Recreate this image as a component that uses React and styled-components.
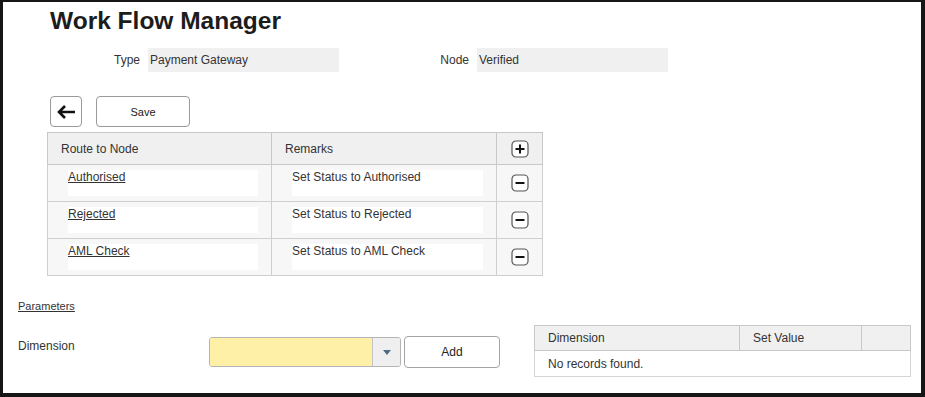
import React from 'react'
import styled, { createGlobalStyle } from 'styled-components'

const GlobalStyle = createGlobalStyle`
    html, body {
        margin: 0;
        padding: 0;
        background: #ffffff;
    }
    body {
        font-family: "Liberation Sans", Arial, sans-serif;
        font-size: 12px;
        color: #333333;
    }
`

const routes = [
    { node: "Authorised", remark: "Set Status to Authorised" },
    { node: "Rejected", remark: "Set Status to Rejected" },
    { node: "AML Check", remark: "Set Status to AML Check" }
]

export default function App() {
    return (
        <>
            <GlobalStyle />
            <Frame>
                <Title>Work Flow Manager</Title>

                <FieldsRow>
                    <Field>
                        <Label width={40}>Type</Label>
                        <ReadOnly>Payment Gateway</ReadOnly>
                    </Field>
                    <Field>
                        <Label width={130}>Node</Label>
                        <ReadOnly>Verified</ReadOnly>
                    </Field>
                </FieldsRow>

                <Toolbar>
                    <IconButton aria-label="back">
                        <svg width="20" height="16" viewBox="0 0 20 16">
                            <path d="M19 8H3M9 2L3 8l6 6" fill="none" stroke="#111" strokeWidth="2.6" />
                        </svg>
                    </IconButton>
                    <SaveButton>Save</SaveButton>
                </Toolbar>

                <RouteTable>
                    <thead>
                        <tr>
                            <Th width={224}>Route to Node</Th>
                            <Th width={225}>Remarks</Th>
                            <ActionTh>
                                <SquareIcon plus />
                            </ActionTh>
                        </tr>
                    </thead>
                    <tbody>
                        {routes.map((r) =>
                            <tr key={r.node}>
                                <Td>
                                    <CellBox>
                                        <NodeLink>{r.node}</NodeLink>
                                    </CellBox>
                                </Td>
                                <Td>
                                    <CellBox>{r.remark}</CellBox>
                                </Td>
                                <ActionTd>
                                    <SquareIcon />
                                </ActionTd>
                            </tr>
                        )}
                    </tbody>
                </RouteTable>

                <ParamsLink>Parameters</ParamsLink>

                <BottomRow>
                    <DimensionForm>
                        <DimLabel>Dimension</DimLabel>
                        <Select>
                            <SelectValue />
                            <SelectArrow>
                                <svg width="8" height="5" viewBox="0 0 8 5">
                                    <path d="M0 0h8L4 5z" fill="#4e6d85" />
                                </svg>
                            </SelectArrow>
                        </Select>
                        <AddButton>Add</AddButton>
                    </DimensionForm>

                    <ParamTable>
                        <thead>
                            <tr>
                                <PTh width={205}>Dimension</PTh>
                                <PTh width={122}>Set Value</PTh>
                                <PTh />
                            </tr>
                        </thead>
                        <tbody>
                            <tr>
                                <PTd colSpan={3}>No records found.</PTd>
                            </tr>
                        </tbody>
                    </ParamTable>
                </BottomRow>
            </Frame>
        </>
    )
}

function SquareIcon({ plus }) {
    return (
        <svg width="18" height="18" viewBox="0 0 18 18">
            <rect x="1" y="1" width="16" height="16" rx="4" fill="#fff" stroke="#555" strokeWidth="1.2" />
            <path d="M4.5 9h9" stroke="#111" strokeWidth="2" />
            {plus && <path d="M9 4.5v9" stroke="#111" strokeWidth="2" />}
        </svg>
    )
}

const Frame = styled.div`
    box-sizing: border-box;
    width: 925px;
    height: 397px;
    border-style: solid;
    border-color: #161616;
    border-width: 2px 4px 4px 3px;
    padding: 4px 10px 0 15px;
    overflow: hidden;
`

const Title = styled.h1`
    margin: 0 0 0 32px;
    font-size: 24.5px;
    line-height: 30px;
    font-weight: bold;
    color: #1c1c1c;
`

const FieldsRow = styled.div`
    display: flex;
    margin: 12px 0 0 82px;
`

const Field = styled.div`
    display: flex;
    align-items: center;
`

const Label = styled.span`
    width: ${(p) => p.width}px;
    text-align: right;
    padding-right: 8px;
    font-size: 12px;
    color: #333;
`

const ReadOnly = styled.div`
    box-sizing: border-box;
    width: 191px;
    height: 24px;
    line-height: 24px;
    padding-left: 2px;
    background: #f0f0f0;
    font-size: 12px;
    color: #333;
`

const Toolbar = styled.div`
    display: flex;
    gap: 14px;
    margin: 24px 0 0 32px;
`

const IconButton = styled.button`
    box-sizing: border-box;
    width: 32px;
    height: 31px;
    padding: 0;
    display: flex;
    align-items: center;
    justify-content: center;
    background: #fff;
    border: 1px solid #9a9a9a;
    border-radius: 4px;
`

const SaveButton = styled.button`
    box-sizing: border-box;
    width: 94px;
    height: 31px;
    background: #fff;
    border: 1px solid #9a9a9a;
    border-radius: 4px;
    font-family: "Liberation Sans", Arial, sans-serif;
    font-size: 11px;
    color: #222;
`

const RouteTable = styled.table`
    margin: 5px 0 0 29px;
    width: 496px;
    table-layout: fixed;
    border-collapse: collapse;
    border: 1px solid #c8c8c8;
`

const Th = styled.th`
    box-sizing: border-box;
    width: ${(p) => p.width}px;
    height: 31px;
    padding: 0 0 0 13px;
    text-align: left;
    font-weight: normal;
    font-size: 12px;
    color: #333;
    background: #f0f0f0;
    border: 1px solid #c8c8c8;
`

const ActionTh = styled.th`
    height: 31px;
    padding: 0;
    text-align: center;
    background: #f0f0f0;
    border: 1px solid #c8c8c8;
    svg {
        display: block;
        margin: 0 auto;
    }
`

const Td = styled.td`
    height: 37px;
    padding: 5px 13px 5px 20px;
    box-sizing: border-box;
    background: #f7f7f7;
    border: 1px solid #cfcfcf;
    vertical-align: top;
`

const ActionTd = styled.td`
    padding: 0;
    background: #f7f7f7;
    border: 1px solid #cfcfcf;
    svg {
        display: block;
        margin: 0 auto;
    }
`

const CellBox = styled.div`
    height: 26px;
    background: #fff;
    font-size: 12px;
    line-height: 14px;
    color: #333;
`

const NodeLink = styled.a`
    color: #333;
    text-decoration: underline;
    cursor: pointer;
`

const ParamsLink = styled.a`
    display: block;
    margin: 24px 0 0 0;
    font-size: 11px;
    color: #333;
    text-decoration: underline;
`

const BottomRow = styled.div`
    display: flex;
    justify-content: space-between;
    align-items: flex-start;
    margin-top: 13px;
`

const DimensionForm = styled.div`
    display: flex;
    align-items: center;
    margin-top: 11px;
`

const DimLabel = styled.span`
    width: 191px;
    font-size: 12px;
    color: #333;
    margin-top: -12px;
`

const Select = styled.div`
    box-sizing: border-box;
    display: flex;
    width: 192px;
    height: 30px;
    border: 1px solid #b4b4b4;
    border-radius: 3px;
    overflow: hidden;
`

const SelectValue = styled.div`
    flex: 1;
    background: #fff0a8;
`

const SelectArrow = styled.div`
    width: 27px;
    display: flex;
    align-items: center;
    justify-content: center;
    background: #efefef;
    border-left: 1px solid #c4c4c4;
`

const AddButton = styled.button`
    box-sizing: border-box;
    width: 96px;
    height: 32px;
    margin-left: 3px;
    background: #fff;
    border: 1px solid #a4a4a4;
    border-radius: 4px;
    font-family: "Liberation Sans", Arial, sans-serif;
    font-size: 12px;
    color: #222;
`

const ParamTable = styled.table`
    width: 377px;
    table-layout: fixed;
    border-collapse: collapse;
    border: 1px solid #c8c8c8;
`

const PTh = styled.th`
    box-sizing: border-box;
    width: ${(p) => (p.width ? `${p.width}px` : 'auto')};
    height: 25px;
    padding: 0 0 0 13px;
    text-align: left;
    font-weight: normal;
    font-size: 12px;
    color: #333;
    background: #f0f0f0;
    border: 1px solid #c8c8c8;
`

const PTd = styled.td`
    height: 25px;
    padding: 0 0 0 13px;
    font-size: 12px;
    color: #333;
    background: #fff;
    border: 1px solid #d4d4d4;
`
